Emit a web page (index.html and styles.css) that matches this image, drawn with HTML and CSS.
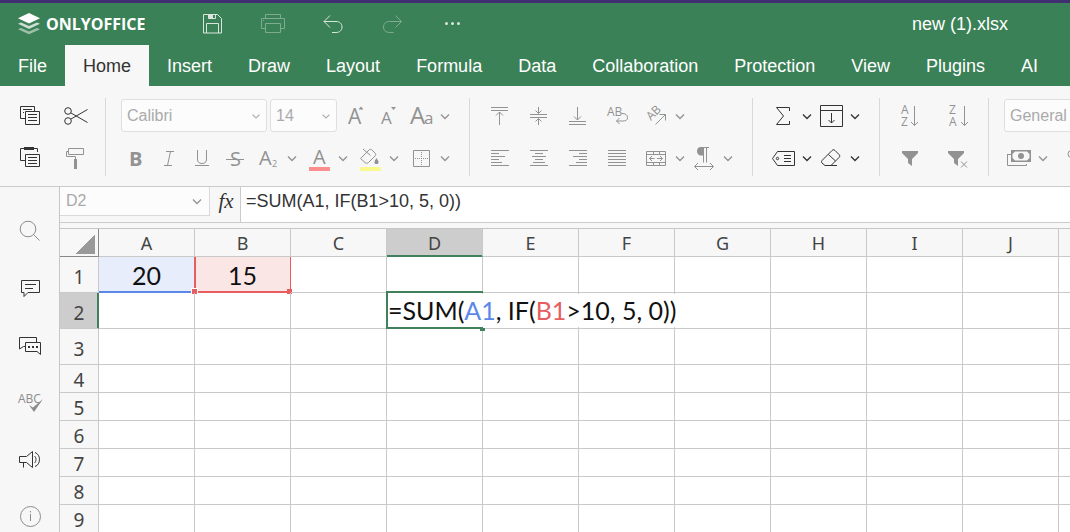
FILE: index.html
```html
<!DOCTYPE html>
<html lang="en">
<head>
<meta charset="utf-8">
<title>new (1).xlsx</title>
<link rel="stylesheet" href="styles.css">
</head>
<body>
<svg class="defs" aria-hidden="true">
  <symbol id="chev" viewBox="0 0 24 24"><path stroke-width="1.300" d="M8 10.500l4 4 4-4"/></symbol>
</svg>
<div class="app">
  <header class="header">
    <div class="title-row">
      <div class="logo">
        <svg class="logo-mark" viewBox="0 0 24 24" aria-hidden="true">
          <path d="M1 17.200l3-1.300 8 3.500 8-3.500 3 1.300-11 5.100z" fill="#fff" opacity=".5"/>
          <path d="M1 11.800l3-1.300 8 3.500 8-3.500 3 1.300-11 5.100z" fill="#fff" opacity=".75"/>
          <path d="M12 1l11 5.200-11 5.200L1 6.200z" fill="#fff"/>
        </svg>
        <span>ONLYOFFICE</span>
      </div>
      <div class="quick">
        <button aria-label="Save"><svg class="icon" viewBox="0 0 24 24"><path d="M3.500 2.500h14l4 4v14.500h-18zM6.500 21v-9.500h12V21"/><path d="M8.500 2.500h7v4h-7z"/><path class="fill" d="M9 3h4v4H9z"/></svg></button>
        <button class="dim" aria-label="Print"><svg class="icon" viewBox="0 0 24 24"><path d="M5.500 16.500h-4v-10h23v10h-4M5.500 6.500v-4h15v4M5.500 11.500h15v9h-15zM3 8.500h1"/></svg></button>
        <button aria-label="Undo"><svg class="icon" viewBox="0 0 24 24"><path d="M10 3.500l-6 6 6 6M4 9.500h12c3.500 0 6 2 6 5.500s-2.500 5.500-6 5.500h-4"/></svg></button>
        <button class="dim" aria-label="Redo"><svg class="icon" viewBox="0 0 24 24"><path d="M15.500 3.500l6 6-6 6M21.500 9.500h-12c-3.500 0-6 2-6 5.500s2.500 5.500 6 5.500h4"/></svg></button>
        <button aria-label="More"><svg class="icon" viewBox="0 0 24 24"><g class="fill"><circle cx="6.500" cy="11.500" r="1.500"/><circle cx="12.500" cy="11.500" r="1.500"/><circle cx="18.500" cy="11.500" r="1.500"/></g></svg></button>
      </div>
      <div class="doc-name">new (1).xlsx</div>
    </div>
    <nav class="tabs">
      <button>File</button><button class="active">Home</button><button>Insert</button><button>Draw</button><button>Layout</button><button>Formula</button><button>Data</button><button>Collaboration</button><button>Protection</button><button>View</button><button>Plugins</button><button>AI</button>
    </nav>
  </header>

  <div class="toolbar">
    <div class="group clipboard">
      <div class="tools">
        <button aria-label="Copy"><svg class="icon" viewBox="0 0 24 24"><path d="M7 14.500H2.500v-12h14V7M7.500 7.500h14v13h-14zM10 10.500h9M10 13.500h9M10 16.500h9M5 5.500h9M5 8.500h1"/></svg></button>
        <button aria-label="Cut"><svg class="icon" viewBox="0 0 24 24"><circle cx="4" cy="7" r="3.300"/><circle cx="4" cy="17" r="3.300"/><path d="M7 9l16.500 9.500M7 15l16.500-9.500"/></svg></button>
      </div>
      <div class="tools">
        <button aria-label="Paste"><svg class="icon" viewBox="0 0 24 24"><path d="M7 14.500H2.500v-12H6M15 2.500h4.500V6M7.500 8.500h14v12h-14zM10 11.500h9M10 14.500h9M10 17.500h9"/><path class="fill" d="M6 1h10v3H6z"/></svg></button>
        <button class="off" aria-label="Copy style"><svg class="icon" viewBox="0 0 24 24"><path d="M4.500 2.500h15v6h-15zM4.500 5.500h-2v5h9V13"/><path class="fill" d="M10 13h3v10h-3z"/></svg></button>
      </div>
    </div>
    <div class="group font">
      <div class="tools">
        <label class="combo font-name"><select aria-label="Font"><option>Calibri</option></select><svg class="icon"><use href="#chev"/></svg></label>
        <label class="combo font-size"><select aria-label="Font size"><option>14</option></select><svg class="icon"><use href="#chev"/></svg></label>
        <button class="off grow" aria-label="Increase font size"><svg class="icon" viewBox="0 0 24 24"><text x="5" y="20" font-size="21">A</text><path class="fill" d="M15.500 5.500l2.500-3 2.500 3z"/></svg></button>
        <button class="off" aria-label="Decrease font size"><svg class="icon" viewBox="0 0 24 24"><text x="5" y="20" font-size="17">A</text><path class="fill" d="M15 3l2.500 3L20 3z"/></svg></button>
        <div class="split off"><button aria-label="Change case"><svg class="icon" viewBox="0 0 24 24"><text x="1" y="20" font-size="24">A</text><text x="15" y="20" font-size="17">a</text></svg></button><button aria-label="Case options"><svg class="icon"><use href="#chev"/></svg></button></div>
      </div>
      <div class="tools marks">
        <button class="off" aria-label="Bold"><svg class="icon" viewBox="0 0 24 24"><text class="bold" x="5" y="20" font-size="20">B</text></svg></button>
        <button class="off" aria-label="Italic"><svg class="icon" viewBox="0 0 24 24"><path d="M9 5.500h8M7 19.500h8M13.500 5.500l-3 14"/></svg></button>
        <button class="off" aria-label="Underline"><svg class="icon" viewBox="0 0 24 24"><path d="M7.500 4v9c0 3 1.500 4.500 4.500 4.500s4.500-1.500 4.500-4.500V4M5 19.500h14"/></svg></button>
        <button class="off" aria-label="Strikethrough"><svg class="icon" viewBox="0 0 24 24"><text x="7" y="20" font-size="20">S</text><path d="M3 13.500h18"/></svg></button>
        <div class="split off"><button aria-label="Subscript"><svg class="icon" viewBox="0 0 24 24"><text x="3" y="19" font-size="20">A</text><text class="sub" x="16" y="21" font-size="9">2</text></svg></button><button aria-label="Subscript options"><svg class="icon"><use href="#chev"/></svg></button></div>
        <div class="split near off"><button aria-label="Font color"><svg class="icon" viewBox="0 0 24 24"><text x="6" y="18" font-size="20">A</text><path class="red" d="M2 21h21v4H2z"/></svg></button><button aria-label="Font colors"><svg class="icon"><use href="#chev"/></svg></button></div>
        <div class="split near off"><button aria-label="Fill color"><svg class="icon" viewBox="0 0 24 24"><path d="M2.500 12.500L11 4c1-1 2-1 3 0l3 3c1 1 1 2 0 3l-6.500 6.500c-1 1-2.500 1-3.500 0zM5 3l7.500 6.500"/><path class="fill" d="M18.500 12c3 4 2.500 6 0 6s-3-2 0-6z"/><path class="yellow" d="M2 21h21v4H2z"/></svg></button><button aria-label="Fill colors"><svg class="icon"><use href="#chev"/></svg></button></div>
        <div class="split near off"><button aria-label="Borders"><svg class="icon" viewBox="0 0 24 24"><path d="M4.500 4.500h16v16h-16z"/><path stroke-dasharray="1 1" d="M6 12.500h13M12.500 6v13"/></svg></button><button aria-label="Border options"><svg class="icon"><use href="#chev"/></svg></button></div>
      </div>
    </div>
    <div class="group align">
      <div class="tools">
        <button class="off" aria-label="Align top"><svg class="icon" viewBox="0 0 24 24"><path d="M3 3.500h17M3 6.500h17M11.500 21V8M8 11.500L11.500 8l3.500 3.500"/></svg></button>
        <button class="off" aria-label="Align middle"><svg class="icon" viewBox="0 0 24 24"><path d="M3 10.500h17M3 13.500h17M11.500 3v6M8.500 6.500l3 3 3-3M11.500 21v-6M8.500 17.500l3-3 3 3"/></svg></button>
        <button class="off" aria-label="Align bottom"><svg class="icon" viewBox="0 0 24 24"><path d="M3 17.500h17M3 20.500h17M11.500 3v13M8 12.500l3.500 3.500 3.500-3.500"/></svg></button>
        <button class="off" aria-label="Wrap text"><svg class="icon" viewBox="0 0 24 24"><text x="2" y="12" font-size="12">AB</text><path d="M17 9.500c3 0 5.500 1 5.500 4s-2 3.500-5 3.500h-6M14.500 14l-3 3 3 3"/></svg></button>
        <div class="split off"><button aria-label="Orientation"><svg class="icon" viewBox="0 0 24 24"><text transform="translate(7 17) rotate(-45)" x="0" y="0" font-size="12">AB</text><path d="M11.500 20.500l10-10M15.500 10.500h6v6"/></svg></button><button aria-label="Orientation options"><svg class="icon"><use href="#chev"/></svg></button></div>
      </div>
      <div class="tools">
        <button class="off" aria-label="Align left"><svg class="icon" viewBox="0 0 24 24"><path d="M3 4.500h18M3 7.500h8M3 10.500h14M3 13.500h8M3 16.500h11M3 19.500h18"/></svg></button>
        <button class="off" aria-label="Align center"><svg class="icon" viewBox="0 0 24 24"><path d="M3 4.500h18M8 7.500h8M5 10.500h14M8 13.500h8M6 16.500h12M3 19.500h18"/></svg></button>
        <button class="off" aria-label="Align right"><svg class="icon" viewBox="0 0 24 24"><path d="M3 4.500h18M13 7.500h8M7 10.500h14M13 13.500h8M10 16.500h11M3 19.500h18"/></svg></button>
        <button class="off" aria-label="Justify"><svg class="icon" viewBox="0 0 24 24"><path d="M3 4.500h18M3 7.500h18M3 10.500h18M3 13.500h18M3 16.500h18M3 19.500h18"/></svg></button>
        <div class="split off"><button aria-label="Merge cells"><svg class="icon" viewBox="0 0 24 24"><path d="M2.500 5.500h19v14h-19zM2.500 8.500h19M2.500 16.500h19M9.500 5.500v3M15.500 5.500v3M9.500 16.500v3M15.500 16.500v3M5.500 12.500h5M13 12.500h5.500M8 10l-2.500 2.500L8 15M16 10l2.500 2.500L16 15"/></svg></button><button aria-label="Merge options"><svg class="icon"><use href="#chev"/></svg></button><button aria-label="Text direction"><svg class="icon" viewBox="0 0 24 24"><path d="M9 1.500h8M11.500 1.500v15M14.500 1.500v15M2.500 20.500h19M6 17l-3.500 3.500L6 24M18 17l3.500 3.500L18 24"/><path class="fill" d="M11.500 1H9C6 1 5 3 5 5.200S6.500 9.500 9 9.500h2.500z"/></svg></button><button aria-label="Direction options"><svg class="icon"><use href="#chev"/></svg></button></div>
      </div>
    </div>
    <div class="group edit">
      <div class="tools">
        <div class="split"><button aria-label="Sum"><svg class="icon" viewBox="0 0 24 24"><path d="M18.500 7V3.500h-13l7 8.500-7 8.500h13V17"/></svg></button><button aria-label="Sum options"><svg class="icon"><use href="#chev"/></svg></button><button aria-label="Fill"><svg class="icon" viewBox="0 0 24 24"><path d="M1.500 1.500h22v21h-22zM1.500 6.500h22M12.500 9v10M9.500 16l3 3 3-3"/></svg></button><button aria-label="Fill options"><svg class="icon"><use href="#chev"/></svg></button></div>
      </div>
      <div class="tools">
        <div class="split"><button aria-label="Named ranges"><svg class="icon" viewBox="0 0 24 24"><path d="M1.500 12.500l5-7h17v14h-17zM13 9.500h7M13 12.500h7M13 15.500h7"/><circle cx="6.500" cy="12.500" r="1.200"/></svg></button><button aria-label="Name options"><svg class="icon"><use href="#chev"/></svg></button><button aria-label="Clear"><svg class="icon" viewBox="0 0 24 24"><path d="M3.500 14l9.500-9.500c1-1 2-1 3 0L20 8.500c1 1 1 2 0 3l-8 8H6L3 17c-1-1-.5-2 .5-3zM9.500 8.500l7 6.500M6 19.500h12"/></svg></button><button aria-label="Clear options"><svg class="icon"><use href="#chev"/></svg></button></div>
      </div>
    </div>
    <div class="group sort">
      <div class="tools">
        <button class="off" aria-label="Sort ascending"><svg class="icon" viewBox="0 0 24 24"><text x="4" y="10" font-size="12">A</text><text x="4" y="22" font-size="12">Z</text><path d="M17.500 2v19.500M14 18l3.500 3.500L21 18"/></svg></button>
        <button class="off" aria-label="Sort descending"><svg class="icon" viewBox="0 0 24 24"><text x="4" y="10" font-size="12">Z</text><text x="4" y="22" font-size="12">A</text><path d="M19.500 2v19.500M16 18l3.500 3.500L23 18"/></svg></button>
      </div>
      <div class="tools">
        <button class="off" aria-label="Filter"><svg class="icon" viewBox="0 0 24 24"><path class="fill" d="M5 5h16v2l-6 6v7l-4-3v-4L5 7z"/></svg></button>
        <button class="off" aria-label="Clear filter"><svg class="icon" viewBox="0 0 24 24"><path class="fill" d="M3 5h16v2l-6 6v7l-4-3v-4L3 7z"/><path d="M16 15.500l6 6M22 15.500l-6 6"/></svg></button>
      </div>
    </div>
    <div class="group number">
      <div class="tools">
        <label class="combo format"><select aria-label="Number format"><option>General</option></select><svg class="icon"><use href="#chev"/></svg></label>
      </div>
      <div class="tools">
        <div class="split off"><button aria-label="Accounting style"><svg class="icon" viewBox="0 0 24 24"><path d="M.5 8v11.500h19V18M.5 8.500H4"/><path class="fill" fill-rule="evenodd" d="M4 4h20v12H4zM8 5.500L5.500 8v4L8 14.500h12l2.500-2.500V8L20 5.500z"/><circle class="fill" cx="14" cy="10" r="3"/></svg></button><button aria-label="Accounting options"><svg class="icon"><use href="#chev"/></svg></button></div>
        <button class="off" aria-label="Percent style"><svg class="icon" viewBox="0 0 24 24"><circle cx="4.500" cy="8" r="3.500"/><circle cx="17.500" cy="16" r="3.500"/><path d="M18 4L4 20"/></svg></button>
      </div>
    </div>
  </div>

  <div class="work">
    <aside class="side">
      <button class="pale" aria-label="Find"><svg class="icon" viewBox="0 0 24 24"><circle cx="10" cy="10" r="7.800"/><path d="M15.500 15.500l6 6"/></svg></button>
      <button aria-label="Comments"><svg class="icon" viewBox="0 0 24 24"><path d="M3.500 4.500h18v12H10l-4 4v-4H3.500zM7 8.500h11M7 12.500h8"/></svg></button>
      <button aria-label="Chat"><svg class="icon" viewBox="0 0 24 24"><path d="M7 13.500H5.500L1.500 16V4.500h17V9M7.500 9.500h15v12L19 18.500H7.500z"/><path class="fill" d="M10 13h2v2h-2zM14 13h2v2h-2zM18 13h2v2h-2z"/></svg></button>
      <button class="pale" aria-label="Spell checking"><svg class="icon" viewBox="0 0 24 24"><text x="0" y="13" font-size="12">ABC</text><path class="fill" d="M11 15l4 2.500L25 9l-9 13z"/></svg></button>
      <button aria-label="Feedback"><svg class="icon" viewBox="0 0 24 24"><path d="M1.500 9.500h7l6-5v16l-6-5h-7zM5.500 15.500v5M16.500 9c2 2 2 5 0 7M17 5.500c6 2 6 12 0 14"/></svg></button>
      <button class="pale" aria-label="About"><svg class="icon" viewBox="0 0 24 24"><circle cx="12.500" cy="12.500" r="10"/><path d="M12.500 10v7M12.500 7v1.500"/></svg></button>
    </aside>
    <main class="main">
      <div class="formula-bar">
        <div class="name-box"><input aria-label="Cell name" value="D2"><button class="off" aria-label="Names"><svg class="icon"><use href="#chev"/></svg></button></div>
        <button class="fx" aria-label="Insert function">fx</button>
        <input class="formula" aria-label="Formula" value="=SUM(A1, IF(B1&gt;10, 5, 0))">
      </div>
      <div class="sheet">
        <table class="grid">
          <thead>
            <tr><th class="corner" aria-label="Select all"></th><th>A</th><th>B</th><th>C</th><th class="current">D</th><th>E</th><th>F</th><th>G</th><th>H</th><th>I</th><th>J</th><th></th></tr>
          </thead>
          <tbody>
            <tr class="tall"><th>1</th><td class="ref blue">20</td><td class="ref rose">15<i class="handle"></i></td><td></td><td></td><td></td><td></td><td></td><td></td><td></td><td></td><td></td></tr>
            <tr class="tall"><th class="current">2</th><td></td><td></td><td></td><td class="editing"><span class="editor">=SUM(<span class="ref-a">A1</span>, IF(<span class="ref-b">B1</span>&gt;10, 5, 0))</span></td><td></td><td></td><td></td><td></td><td></td><td></td><td></td></tr>
            <tr class="tall"><th>3</th><td></td><td></td><td></td><td></td><td></td><td></td><td></td><td></td><td></td><td></td><td></td></tr>
            <tr><th>4</th><td></td><td></td><td></td><td></td><td></td><td></td><td></td><td></td><td></td><td></td><td></td></tr>
            <tr><th>5</th><td></td><td></td><td></td><td></td><td></td><td></td><td></td><td></td><td></td><td></td><td></td></tr>
            <tr><th>6</th><td></td><td></td><td></td><td></td><td></td><td></td><td></td><td></td><td></td><td></td><td></td></tr>
            <tr><th>7</th><td></td><td></td><td></td><td></td><td></td><td></td><td></td><td></td><td></td><td></td><td></td></tr>
            <tr><th>8</th><td></td><td></td><td></td><td></td><td></td><td></td><td></td><td></td><td></td><td></td><td></td></tr>
            <tr><th>9</th><td></td><td></td><td></td><td></td><td></td><td></td><td></td><td></td><td></td><td></td><td></td></tr>
          </tbody>
        </table>
      </div>
    </main>
  </div>
</div>
</body>
</html>
```
FILE: styles.css
```css
* { box-sizing: border-box; }

body {
  margin: 0;
  background: #f7f7f7;
  color: #333;
  font-family: "Liberation Sans", Arial, sans-serif;
  font-size: 18px;
}

button {
  margin: 0;
  padding: 0;
  border: 0;
  background: none;
  color: inherit;
  font: inherit;
  flex: none;
}

.defs { display: none; }

.app {
  display: flex;
  flex-direction: column;
  height: 100vh;
  overflow: hidden;
}

.icon {
  display: block;
  width: 24px;
  height: 24px;
  overflow: visible;
  fill: none;
  stroke: currentColor;
}

.icon text {
  fill: currentColor;
  stroke: none;
  font-family: "Open Sans", sans-serif;
  line-height: 1;
}

.icon .fill { fill: currentColor; stroke: none; }
.icon .bold { font-weight: 700; }
.icon .red { fill: #fc8e8e; stroke: none; }
.icon .yellow { fill: #fafa8c; stroke: none; }

/* Header */
.header {
  flex: none;
  border-top: 3px solid #3f2f70;
  background: #3b8157;
  color: #fff;
}

.title-row {
  display: flex;
  align-items: center;
  height: 42px;
  padding: 0 62px 0 17px;
}

.logo {
  display: flex;
  align-items: center;
  gap: 5px;
  width: 183px;
  font: 700 16px "Open Sans", sans-serif;
}

.logo-mark { width: 24px; height: 24px; }

.quick { display: flex; gap: 36px; color: #d8e6dd; }
.quick .dim { color: #7fab90; }
.doc-name { margin-left: auto; }

.tabs { display: flex; height: 41px; }
.tabs button { padding: 2px 18px 0; }
.tabs .active { background: #f7f7f7; color: #333; }

/* Toolbar */
.toolbar {
  display: flex;
  flex: none;
  height: 101px;
  padding: 12px 0 10px;
  border-bottom: 1px solid #cbcbcb;
  overflow: hidden;
}

.group {
  display: flex;
  flex: none;
  flex-direction: column;
  gap: 7px;
  border-right: 1px solid #d9d9d9;
}

.tools { display: flex; align-items: center; height: 35px; }
.split { display: flex; }
.off { color: #929292; }

.clipboard { padding: 0 17px 0 18px; }
.clipboard .tools { gap: 22px; }
.font { padding: 0 12px 0 15px; }
.font .tools { gap: 9px; }
.font .combo { margin-right: -6px; }
.font .grow { margin-left: 3px; }
.font .marks { padding-left: 3px; }
.font .near { margin-left: -6px; }
.align { padding: 0 12px 0 18px; }
.align .tools { gap: 15px; }
.edit { padding: 0 12px 0 18px; }
.sort { padding: 0 19px 0 17px; }
.sort .tools { gap: 24px; }
.number { padding-left: 15px; border-right: 0; }
.number .split { margin: 0 12px 0 3px; }

.combo {
  display: flex;
  align-items: center;
  height: 33px;
  border: 1px solid #dfdfdf;
  border-radius: 3px;
  background: #fcfcfc;
  color: #aaa;
}

.combo select {
  flex: 1;
  min-width: 0;
  padding: 0 5px;
  border: 0;
  appearance: none;
  background: none;
  color: inherit;
  font: 16px "Liberation Sans", Arial, sans-serif;
  opacity: 1;
}

.combo .icon { flex: none; width: 20px; }
.font-name { width: 146px; }
.font-size { width: 67px; }
.format { width: 146px; }

/* Work area */
.work { display: flex; flex: 1; min-height: 0; }

.side {
  display: flex;
  flex: none;
  flex-direction: column;
  align-items: center;
  gap: 33px;
  width: 60px;
  padding-top: 32px;
  border-right: 1px solid #c6c6c6;
}

.side .pale { color: #8c8c8c; }

.main { display: flex; flex: 1; flex-direction: column; min-width: 0; }

.formula-bar {
  display: flex;
  flex: none;
  height: 36px;
  border-bottom: 1px solid #cbcbcb;
}

.name-box {
  display: flex;
  align-items: center;
  width: 150px;
  height: 29px;
  border: solid #d9d9d9;
  border-width: 0 1px 1px 0;
  background: #fcfcfc;
}

.name-box input {
  flex: 1;
  min-width: 0;
  padding: 0 6px;
  border: 0;
  background: none;
  color: #aaa;
  font: 16px "Liberation Sans", Arial, sans-serif;
}

.fx {
  width: 30px;
  height: 28px;
  padding-left: 2px;
  font: italic 21px/24px "Liberation Serif", serif;
}

.formula {
  flex: 1;
  min-width: 0;
  padding: 0 5px 7px;
  border: 0;
  border-left: 1px solid #cbcbcb;
  background: #fff;
  color: #333;
  font: 18px "Liberation Sans", Arial, sans-serif;
}

.sheet {
  flex: 1;
  min-height: 0;
  margin-top: 5px;
  border-top: 1px solid #c6c6c6;
  background: #fff;
  overflow: hidden;
}

.grid {
  width: 1095px;
  border-spacing: 0;
  table-layout: fixed;
  font-family: Lato, sans-serif;
}

.grid th,
.grid td {
  position: relative;
  height: 28px;
  padding: 0;
  border: solid #c9c9c9;
  border-width: 0 1px 1px 0;
  line-height: 24px;
  text-align: center;
}

.grid th {
  background: #f7f7f7;
  color: #444;
  font: 18px/24px "Noto Sans", sans-serif;
}

.grid tbody th { padding-top: 2px; font-size: 19px; }
.grid .tall th { height: 36px; padding-top: 4px; }
.grid .tall td { height: 36px; padding-top: 2px; }
.grid td { color: #111; font-size: 25px; }

.grid .corner {
  width: 39px;
  border-color: #888;
  background: linear-gradient(135deg, transparent 50%, #999 50%) 15px 5px / 20px 20px no-repeat #f7f7f7;
}

.grid .current { background: #cdcdcd; }
.grid thead .current { box-shadow: inset 0 -1px #40815b; border-bottom-color: #40815b; }
.grid tbody .current { box-shadow: inset -1px 0 #40815b; border-right-color: #40815b; }

.grid .ref { border-bottom: 2px solid; }
.grid .blue { background: #e7edfb; border-bottom-color: #5b88e8; }
.grid .rose { background: #fbe6e6; border-color: #e85d5f; }

.rose::before {
  content: "";
  position: absolute;
  inset: 0 auto -2px -1px;
  width: 2px;
  background: #e85d5f;
}

.handle {
  position: absolute;
  bottom: -4px;
  left: -4px;
  width: 7px;
  height: 7px;
  border: 1px solid #fff;
  background: #e85d5f;
}

.rose::after {
  content: "";
  position: absolute;
  right: -2px;
  bottom: -3px;
  width: 5px;
  height: 5px;
  background: #e85d5f;
}

.grid .editing { z-index: 1; }

.editing::before {
  content: "";
  position: absolute;
  inset: -2px -1px -1px -1px;
  border: 2px solid #40815b;
  border-right: 0;
}

.editing::after {
  content: "";
  position: absolute;
  right: -3px;
  bottom: -3px;
  width: 5px;
  height: 3px;
  background: #40815b;
}

.editor {
  position: absolute;
  top: 1px;
  left: 1px;
  background: #fff;
  line-height: 33px;
  white-space: nowrap;
}

.ref-a { color: #5b88e8; }
.ref-b { color: #e85d5f; }
```
